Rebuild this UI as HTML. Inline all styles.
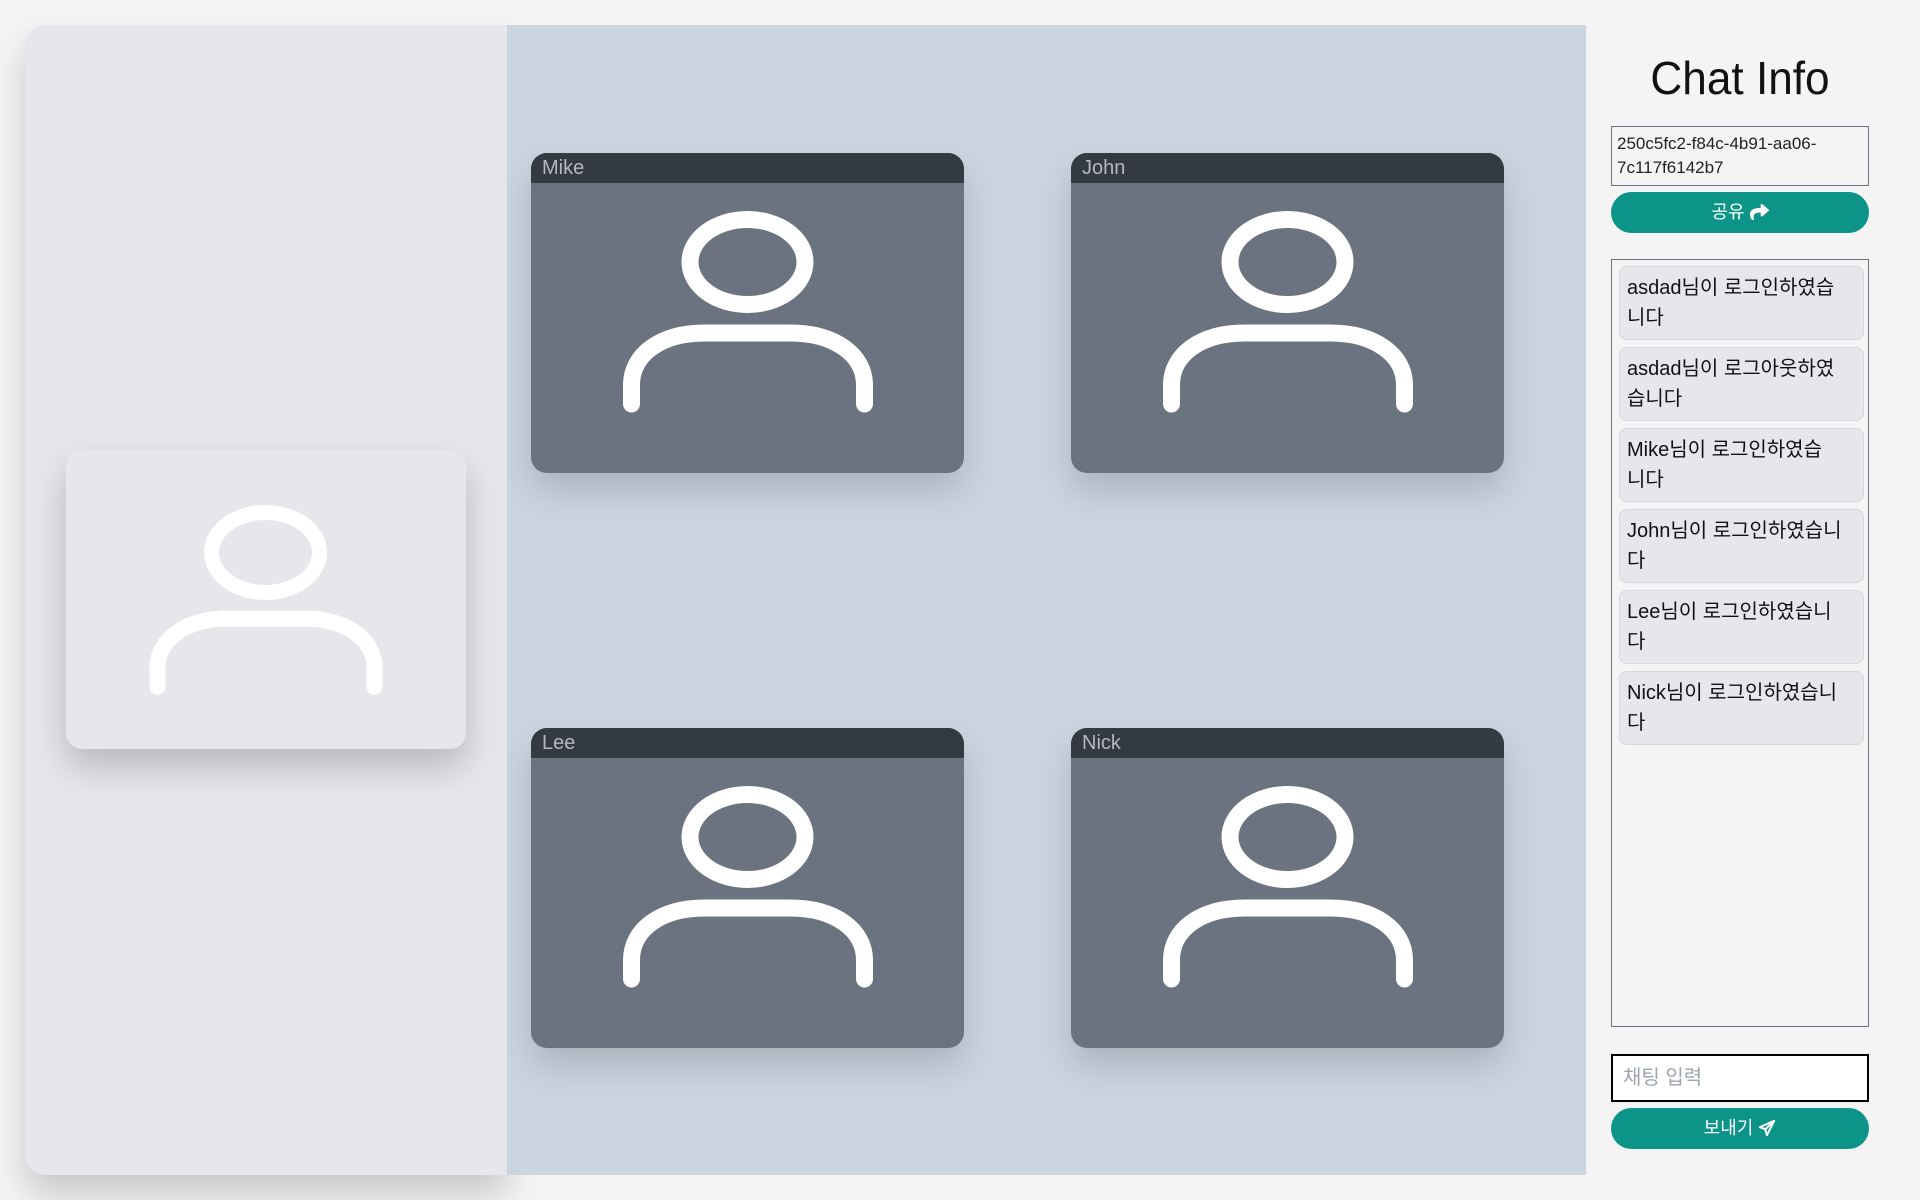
<!DOCTYPE html>
<html><head><meta charset="utf-8"><style>
*{box-sizing:border-box;margin:0;padding:0}
body{width:1920px;height:1200px;background:#f4f4f4;font-family:"Liberation Sans","Noto Sans CJK KR",sans-serif;position:relative;overflow:hidden}
.left{position:absolute;left:25px;top:25px;width:482px;height:1150px;background:#e5e7eb;border-radius:20px 0 0 20px;box-shadow:0 20px 35px rgba(0,0,0,.18)}
.area{position:absolute;left:507px;top:25px;width:1079px;height:1150px;background:#cbd5e1}
.self{position:absolute;left:66px;top:450px;width:400px;height:299px;background:#e5e7eb;border-radius:16px;box-shadow:0 18px 35px rgba(0,0,0,.2)}
.tile{position:absolute;width:433px;height:320px;background:#6b7280;border-radius:16px;overflow:hidden;box-shadow:0 18px 35px rgba(0,0,0,.16)}
.tile .hd{height:30px;background:#343a42;color:#b4b8c0;font-size:20px;padding:4px 0 0 11px}
.tile svg,.self svg{position:absolute;left:0;top:0}
.title{position:absolute;left:1590px;width:300px;top:51px;text-align:center;font-size:46px;color:#111;transform:scaleX(.96)}
.uuid{position:absolute;left:1611px;top:126px;width:258px;height:60px;border:1.5px solid #6b7280;font-size:17px;line-height:24px;padding:5px 0 0 5px;color:#222}
.btn{position:absolute;left:1611px;width:258px;height:41px;background:#0d9488;border-radius:21px;color:#fff;font-size:18px;text-align:center;line-height:41px}
.log{position:absolute;left:1611px;top:259px;width:258px;height:768px;border:1.5px solid #6b7280}
.msg{position:absolute;left:7px;width:245px;height:74px;background:#e5e7eb;border:1px solid #d4d7dd;border-radius:8px;font-size:20px;line-height:30px;padding:6px 0 0 7px;color:#111}
.inp{position:absolute;left:1611px;top:1054px;width:258px;height:48px;border:2px solid #000;background:#fff;color:#9ca3af;font-size:20px;line-height:44px;padding-left:10px}
</style></head><body>
<div class="left"></div>
<div class="area"></div>
<div class="self"><svg width="400" height="299"><ellipse cx="199.5" cy="102.5" rx="54" ry="40" fill="none" stroke="#fff" stroke-width="15"/><path d="M91.5,237 V218 C91.5,188 122,168.5 162,168.5 H238 C278,168.5 308.5,188 308.5,218 V237" fill="none" stroke="#fff" stroke-width="16" stroke-linecap="round"/></svg></div>

<div class="tile" style="left:531px;top:153px"><div class="hd">Mike</div><svg width="433" height="320"><ellipse cx="216.5" cy="109" rx="57.5" ry="42.5" fill="none" stroke="#fff" stroke-width="17"/><path d="M100.5,251 V232 C100.5,202 129,180 174,180 H259 C304,180 333.5,202 333.5,232 V251" fill="none" stroke="#fff" stroke-width="17" stroke-linecap="round"/></svg></div>
<div class="tile" style="left:1071px;top:153px"><div class="hd">John</div><svg width="433" height="320"><ellipse cx="216.5" cy="109" rx="57.5" ry="42.5" fill="none" stroke="#fff" stroke-width="17"/><path d="M100.5,251 V232 C100.5,202 129,180 174,180 H259 C304,180 333.5,202 333.5,232 V251" fill="none" stroke="#fff" stroke-width="17" stroke-linecap="round"/></svg></div>
<div class="tile" style="left:531px;top:728px"><div class="hd">Lee</div><svg width="433" height="320"><ellipse cx="216.5" cy="109" rx="57.5" ry="42.5" fill="none" stroke="#fff" stroke-width="17"/><path d="M100.5,251 V232 C100.5,202 129,180 174,180 H259 C304,180 333.5,202 333.5,232 V251" fill="none" stroke="#fff" stroke-width="17" stroke-linecap="round"/></svg></div>
<div class="tile" style="left:1071px;top:728px"><div class="hd">Nick</div><svg width="433" height="320"><ellipse cx="216.5" cy="109" rx="57.5" ry="42.5" fill="none" stroke="#fff" stroke-width="17"/><path d="M100.5,251 V232 C100.5,202 129,180 174,180 H259 C304,180 333.5,202 333.5,232 V251" fill="none" stroke="#fff" stroke-width="17" stroke-linecap="round"/></svg></div>

<div class="title">Chat Info</div>
<div class="uuid">250c5fc2-f84c-4b91-aa06-<br>7c117f6142b7</div>
<div class="btn" style="top:192px">공유 <svg width="19" height="16" viewBox="0 0 512 430" style="vertical-align:-2px"><path fill="#fff" d="M507 155 331 3C316-10 288 0 288 24v80C128 106 0 138 0 291c0 62 40 123 84 155 14 10 33-3 28-19C66 273 134 231 288 229v84c0 24 28 34 43 21L507 182c11-9 11-18 0-27z"/></svg></div>
<div class="log">
<div class="msg" style="top:6px">asdad님이 로그인하였습<br>니다</div>
<div class="msg" style="top:87px">asdad님이 로그아웃하였<br>습니다</div>
<div class="msg" style="top:168px">Mike님이 로그인하였습<br>니다</div>
<div class="msg" style="top:249px">John님이 로그인하였습니<br>다</div>
<div class="msg" style="top:330px">Lee님이 로그인하였습니<br>다</div>
<div class="msg" style="top:411px">Nick님이 로그인하였습니<br>다</div>
</div>
<div class="inp">채팅 입력</div>
<div class="btn" style="top:1108px">보내기 <svg width="18" height="18" viewBox="0 0 20 20" style="vertical-align:-3px"><path d="M18 2 2 9l6 2.5L10 18z M18 2 8 11.5" fill="none" stroke="#fff" stroke-width="2.2" stroke-linejoin="round"/></svg></div>
</body></html>
